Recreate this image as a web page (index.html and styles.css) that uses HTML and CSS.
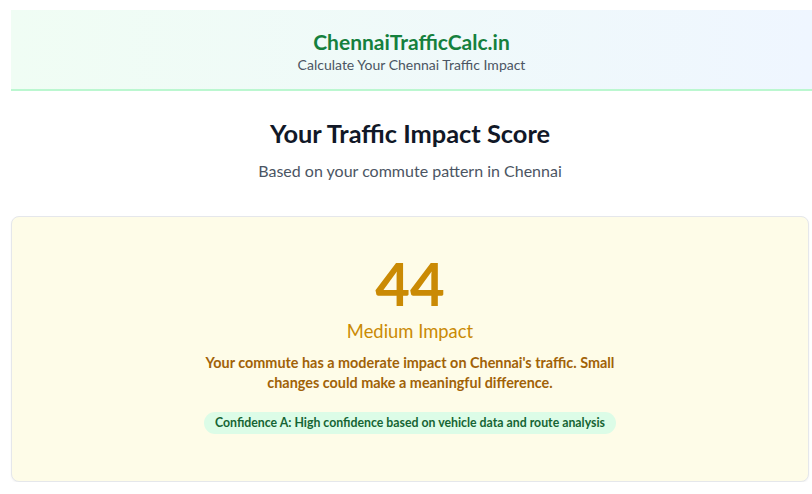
FILE: index.html
```html
<!DOCTYPE html>
<html lang="en">
<head>
<meta charset="utf-8">
<title>ChennaiTrafficCalc.in</title>
<link rel="stylesheet" href="styles.css">
</head>
<body>
<div class="page">
  <header class="site-header">
    <h1 class="brand">ChennaiTrafficCalc.in</h1>
    <p class="tagline">Calculate Your Chennai Traffic Impact</p>
  </header>
  <section class="intro">
    <h2 class="intro-title">Your Traffic Impact Score</h2>
    <p class="intro-sub">Based on your commute pattern in Chennai</p>
  </section>
  <section class="score-card">
    <div class="score">44</div>
    <div class="level">Medium Impact</div>
    <p class="desc">Your commute has a moderate impact on Chennai's traffic. Small changes could make a meaningful difference.</p>
    <span class="badge">Confidence A: High confidence based on vehicle data and route analysis</span>
  </section>
</div>
</body>
</html>
```
FILE: styles.css
```css
* { box-sizing: border-box; }
html, body { margin: 0; padding: 0; background: #ffffff; }
body {
  font-family: "Lato", "Open Sans", sans-serif;
  color: #111827;
  overflow: hidden;
}
.page {
  padding: 10px 3px 0 11px;
}
.site-header {
  margin-right: -3px;
  background: linear-gradient(90deg, #f0fdf4, #eff6ff);
  border-bottom: 2px solid #bbf7d0;
  height: 81px;
  display: flex;
  flex-direction: column;
  align-items: center;
  justify-content: center;
  padding-top: 2px;
}
.brand {
  margin: 0;
  font-size: 21px;
  line-height: 28px;
  font-weight: 700;
  color: #15803d;
}
.tagline {
  margin: 0;
  font-size: 14px;
  line-height: 18px;
  color: #4b5563;
}
.intro {
  text-align: center;
  padding-top: 26px;
}
.intro-title {
  margin: 0;
  font-size: 25.4px;
  line-height: 32px;
  font-weight: 700;
  color: #111827;
}
.intro-sub {
  margin: 10px 0 0;
  font-size: 16px;
  line-height: 24px;
  color: #4b5563;
}
.score-card {
  margin-top: 33px;
  background: #fefce8;
  border: 1px solid #e5e7eb;
  border-radius: 8px;
  box-shadow: 0 1px 2px rgba(0,0,0,0.05);
  height: 266px;
  display: flex;
  flex-direction: column;
  align-items: center;
  padding-top: 34px;
}
.score {
  font-size: 60px;
  line-height: 64px;
  font-weight: 700;
  color: #ca8a04;
}
.level {
  margin-top: 3px;
  font-size: 18.4px;
  line-height: 26px;
  color: #ca8a04;
}
.desc {
  margin: 9px 0 0;
  max-width: 448px;
  text-align: center;
  font-size: 14.4px;
  line-height: 20px;
  font-weight: 700;
  color: #a16207;
}
.badge {
  margin-top: 19px;
  display: inline-block;
  padding: 3px 11px;
  border-radius: 9999px;
  background: #dcfce7;
  color: #166534;
  font-size: 12.3px;
  line-height: 16px;
  font-weight: 700;
}
```
